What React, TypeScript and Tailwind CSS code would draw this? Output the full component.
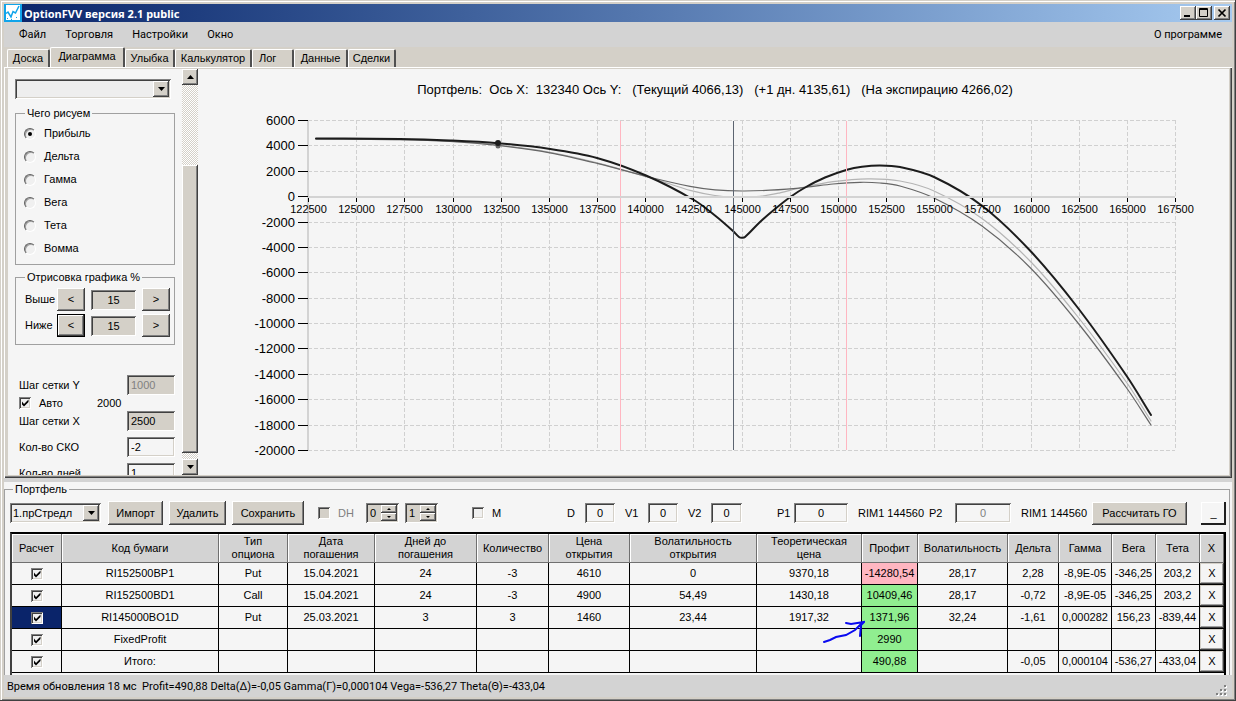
import { useState } from 'react'

const RAISED = 'bg-[#d4d0c8] shadow-[inset_-1px_-1px_#404040,inset_1px_1px_#fff,inset_-2px_-2px_#808080]'
const SUNKEN = 'shadow-[inset_1px_1px_#808080,inset_-1px_-1px_#fff,inset_2px_2px_#404040,inset_-2px_-2px_#d4d0c8]'

const TABS = [
  { label: 'Доска', width: 'w-[43px]' },
  { label: 'Диаграмма', width: 'w-[75px]' },
  { label: 'Улыбка', width: 'w-[50px]' },
  { label: 'Калькулятор', width: 'w-[77px]' },
  { label: 'Лог', width: 'w-[42px]' },
  { label: 'Данные', width: 'w-[54px]' },
  { label: 'Сделки', width: 'w-[48px]' },
]

const MODES = ['Прибыль', 'Дельта', 'Гамма', 'Вега', 'Тета', 'Вомма']

const COLUMNS = [
  { label: 'Расчет', width: 'w-[50px]' },
  { label: 'Код бумаги', width: '' },
  { label: 'Тип опциона', width: 'w-[69px]' },
  { label: 'Дата погашения', width: 'w-[87px]' },
  { label: 'Дней до погашения', width: 'w-[102px]' },
  { label: 'Количество', width: 'w-[72px]' },
  { label: 'Цена открытия', width: 'w-[81px]' },
  { label: 'Волатильность открытия', width: 'w-[127px]' },
  { label: 'Теоретическая цена', width: 'w-[105px]' },
  { label: 'Профит', width: 'w-[56px]' },
  { label: 'Волатильность', width: 'w-[90px]' },
  { label: 'Дельта', width: 'w-[51px]' },
  { label: 'Гамма', width: 'w-[53px]' },
  { label: 'Вега', width: 'w-[44px]' },
  { label: 'Тета', width: 'w-[44px]' },
  { label: 'X', width: 'w-6' },
]

const PROFIT_COL = 8

const ROWS = [
  ['RI152500BP1', 'Put', '15.04.2021', '24', '-3', '4610', '0', '9370,18', '-14280,54', '28,17', '2,28', '-8,9E-05', '-346,25', '203,2'],
  ['RI152500BD1', 'Call', '15.04.2021', '24', '-3', '4900', '54,49', '1430,18', '10409,46', '28,17', '-0,72', '-8,9E-05', '-346,25', '203,2'],
  ['RI145000BO1D', 'Put', '25.03.2021', '3', '3', '1460', '23,44', '1917,32', '1371,96', '32,24', '-1,61', '0,000282', '156,23', '-839,44'],
  ['FixedProfit', '', '', '', '', '', '', '', '2990', '', '', '', '', ''],
  ['Итого:', '', '', '', '', '', '', '', '490,88', '', '-0,05', '0,000104', '-536,27', '-433,04'],
]

type Point = [number, number]

const EXPIRATION: Point[] = [
  [316, 138.5], [400, 139], [450, 140.5], [498, 143.2], [550, 149], [597, 158], [646, 175.5], [694, 200], [715, 215.5],
  [733, 231], [739, 237], [742, 237.7], [745, 237], [760, 222], [775, 209], [791, 196.5], [806, 187], [825, 177.5],
  [847, 169.7], [862, 166.7], [880, 165.4], [900, 167], [934, 177], [982, 205.7], [1030, 250.5], [1078, 308],
  [1127, 376.5], [1151, 415],
]
const CURRENT: Point[] = [
  [316, 139], [400, 139.6], [450, 141.3], [498, 145.4], [550, 152.8], [597, 163.3], [653, 178], [690, 186.3],
  [715, 189.8], [742, 191], [770, 190.2], [806, 187.3], [833, 184], [860, 182.3], [880, 183], [900, 186], [934, 198],
  [982, 226], [1030, 267.5], [1078, 323], [1127, 388.5], [1151, 425],
]
const NEXT_DAY: Point[] = [
  [316, 139], [400, 139.6], [450, 141.2], [498, 145], [550, 152.3], [597, 162.8], [646, 176.5], [670, 184],
  [690, 190.3], [715, 195.5], [735, 197.3], [760, 196.3], [780, 192.8], [800, 188], [833, 181.7], [868, 178.8],
  [900, 181], [934, 191], [982, 218.5], [1030, 261], [1078, 317], [1127, 383], [1151, 421],
]

// Catmull-Rom through the points, written as cubic segments
function smooth(points: Point[]) {
  let d = `M${points[0][0]} ${points[0][1]}`
  for (let i = 0; i < points.length - 1; i++) {
    const a = points[i - 1] ?? points[i]
    const b = points[i]
    const c = points[i + 1]
    const e = points[i + 2] ?? c
    const k = (c[0] - b[0]) / 3
    const m1 = (c[1] - a[1]) / (c[0] - a[0])
    const m2 = (e[1] - b[1]) / (e[0] - b[0])
    d += `C${b[0] + k} ${b[1] + m1 * k} ${c[0] - k} ${c[1] - m2 * k} ${c[0]} ${c[1]}`
  }
  return d
}

export default function App() {
  return (
    <div className="flex h-screen flex-col overflow-hidden bg-[#d4d0c8] p-1 font-['Liberation_Sans',Arial,sans-serif] text-[11px] leading-[13px] text-black shadow-[inset_-1px_-1px_#404040,inset_1px_1px_#d4d0c8,inset_2px_2px_#fff,inset_-2px_-2px_#808080]">
      <TitleBar />
      <MenuBar />
      <TabStrip />
      <main className="flex min-h-0 flex-1 border-t border-l border-white pr-[3px] pb-[3px] pl-[3px] shadow-[inset_-1px_-1px_#404040,inset_-2px_-2px_#808080]">
        <div className="mt-px flex min-w-0 flex-1 bg-[#f5f5f5]">
          <Settings />
          <ScrollBar />
          <Chart />
        </div>
      </main>
      <div className="h-1 shrink-0 bg-[#d3d3d3]" />
      <Portfolio />
      <footer className="flex h-[22px] shrink-0 items-center justify-between bg-[#d3d3d3] pl-[3px] font-[Roboto,'Noto_Sans',sans-serif]">
        <span className="whitespace-pre">Время обновления 18 мс  Profit=490,88 Delta(Δ)=-0,05 Gamma(Г)=0,000104 Vega=-536,27 Theta(Θ)=-433,04</span>
        <svg width="12" height="12" viewBox="0 0 12 12" className="mr-1 self-end">
          {[[8, 0], [4, 4], [8, 4], [0, 8], [4, 8], [8, 8]].map(([x, y]) => (
            <g key={`${x}-${y}`}>
              <rect x={x + 1} y={y + 1} width="2" height="2" fill="#fff" />
              <rect x={x} y={y} width="2" height="2" fill="#808080" />
            </g>
          ))}
        </svg>
      </footer>
    </div>
  )
}

function TitleBar() {
  return (
    <header className="flex h-[18px] shrink-0 items-center bg-linear-to-r from-[#0a246a] to-[#a6caf0] pr-0.5">
      <svg width="18" height="18" viewBox="0 0 18 18">
        <rect width="18" height="18" fill="#10a4ea" />
        <rect x="2" y="1" width="14" height="15" fill="#fff" />
        <path d="M2 9.500L4 8L7 13L9 7.500L11.500 9L15 2" stroke="#10a4ea" strokeWidth="1.5" fill="none" />
        <path d="M3 14.500h1M7 15.500h1M12 13.500h1" stroke="#10a4ea" />
      </svg>
      <h1 className="flex-1 pl-0.5 font-['Noto_Sans',sans-serif] text-[11px] font-bold text-white">OptionFVV версия 2.1 public</h1>
      <button aria-label="Свернуть" className={`h-3.5 w-4 ${RAISED}`}>
        <svg width="16" height="14" viewBox="0 0 16 14"><path d="M4 10h6" stroke="#000" strokeWidth="2" /></svg>
      </button>
      <button aria-label="Развернуть" className={`h-3.5 w-4 ${RAISED}`}>
        <svg width="16" height="14" viewBox="0 0 16 14" fill="none" stroke="#000"><path d="M3.500 2.500h8v8h-8zM3 3.500h9" /></svg>
      </button>
      <button aria-label="Закрыть" className={`ml-0.5 h-3.5 w-4 ${RAISED}`}>
        <svg width="16" height="14" viewBox="0 0 16 14"><path d="M4.500 3.500l7 7M11.500 3.500l-7 7" stroke="#000" strokeWidth="1.7" /></svg>
      </button>
    </header>
  )
}

function MenuBar() {
  return (
    <nav className="flex h-[25px] shrink-0 items-center gap-[19px] bg-[#d3d3d3] pr-2.5 pl-[15px] font-[Roboto,'Noto_Sans',sans-serif]">
      <button>Файл</button>
      <button>Торговля</button>
      <button>Настройки</button>
      <button>Окно</button>
      <button className="ml-auto">О программе</button>
    </nav>
  )
}

function TabStrip() {
  const [active, setActive] = useState('Диаграмма')
  return (
    <div role="tablist" className="flex h-5 shrink-0 items-end pl-[3px]">
      {TABS.map(({ label, width }) => (
        <button
          key={label}
          role="tab"
          aria-selected={active === label}
          onClick={() => setActive(label)}
          className={`${width} ${active === label ? 'h-5 pb-0.5' : 'h-[18px]'} ${label === 'Лог' ? 'pl-1.5 text-left' : ''} shrink-0 rounded-t-[2px] border-t border-r-2 border-l border-t-white border-r-[#505050] border-l-white whitespace-nowrap`}
        >
          {label}
        </button>
      ))}
    </div>
  )
}

function Check({ label, checked = false, disabled = false }: { label: string; checked?: boolean; disabled?: boolean }) {
  const [on, setOn] = useState(checked)
  return (
    <span className="relative inline-block size-3 shrink-0 align-middle">
      <input
        type="checkbox"
        aria-label={label}
        checked={on}
        disabled={disabled}
        onChange={() => setOn(!on)}
        className={`block size-3 appearance-none ${disabled ? 'bg-[#d4d0c8]' : 'bg-[#f0f0f0]'} ${SUNKEN}`}
      />
      {on && (
        <svg width="12" height="12" viewBox="0 0 12 12" className="pointer-events-none absolute inset-0">
          <path d="M3 4.500v3L5 9.500L9.500 5V2.500L5 7z" fill="#000" />
        </svg>
      )}
    </span>
  )
}

function DropDown({ label, options, className }: { label: string; options: string[]; className: string }) {
  return (
    <div className={`relative shrink-0 ${className}`}>
      <select aria-label={label} className={`block size-full appearance-none bg-[#eee] pr-5 pl-[3px] ${SUNKEN}`}>
        {options.map((o) => <option key={o}>{o}</option>)}
      </select>
      <span className={`pointer-events-none absolute top-0.5 right-0.5 bottom-0.5 flex w-4 items-center justify-center ${RAISED}`}>
        <svg width="7" height="4" viewBox="0 0 7 4"><path d="M0 0h7L3.500 4z" /></svg>
      </span>
    </div>
  )
}

function Field({ label, value, className, disabled }: { label: string; value: string; className: string; disabled?: boolean }) {
  return (
    <input
      aria-label={label}
      defaultValue={value}
      disabled={disabled}
      className={`h-5 shrink-0 px-1 ${disabled ? 'text-[#808080]' : ''} ${SUNKEN} ${className}`}
    />
  )
}

function Settings() {
  const [mode, setMode] = useState('Прибыль')
  return (
    <aside className="flex w-[174px] shrink-0 flex-col overflow-hidden pr-[7px] pl-[7px]">
      <DropDown label="График" options={['']} className="mt-2.5 h-5 w-[156px]" />

      <fieldset className="mt-2 h-[158px] w-[160px] shrink-0 border border-[#a0a0a0] pl-2">
        <legend className="ml-px px-0.5">Чего рисуем</legend>
        <div className="mt-[7px] flex flex-col gap-2.5">
          {MODES.map((name) => (
            <label key={name} className="flex h-[13px] items-center gap-2">
              <span className="relative size-3">
                <input
                  type="radio"
                  name="mode"
                  checked={mode === name}
                  onChange={() => setMode(name)}
                  className="block size-3 appearance-none rounded-full border border-t-[#606060] border-r-white border-b-white border-l-[#606060] bg-[#f0f0f0] shadow-[inset_1px_1px_#a0a0a0]"
                />
                {mode === name && <span className="pointer-events-none absolute top-1 left-1 size-1 rounded-full bg-black" />}
              </span>
              {name}
            </label>
          ))}
        </div>
      </fieldset>

      <fieldset className="mt-1.5 h-[74px] w-[160px] shrink-0 border border-[#a0a0a0] pl-[9px]">
        <legend className="px-0.5">Отрисовка графика %</legend>
        <div className="mt-1 flex flex-col gap-[3px]">
          <Stepper label="Выше" />
          <Stepper label="Ниже" focused />
        </div>
      </fieldset>

      <div className="mt-[30px] flex shrink-0 items-center pl-1">
        <span className="flex-1">Шаг сетки Y</span>
        <Field label="Шаг сетки Y" value="1000" disabled className="w-12 bg-[#d4d0c8]" />
      </div>
      <label className="flex h-4 shrink-0 items-center pl-1">
        <Check label="Авто" checked />
        <span className="w-[66px] pl-2">Авто</span>
        <span>2000</span>
      </label>
      <div className="flex shrink-0 items-center pl-1">
        <span className="flex-1">Шаг сетки X</span>
        <Field label="Шаг сетки X" value="2500" className="w-12 bg-[#d4d0c8]" />
      </div>
      <div className="mt-1.5 flex shrink-0 items-center pl-1">
        <span className="flex-1">Кол-во СКО</span>
        <Field label="Кол-во СКО" value="-2" className="w-12" />
      </div>
      <div className="mt-1.5 flex shrink-0 items-center pl-1">
        <span className="flex-1">Кол-во дней</span>
        <Field label="Кол-во дней" value="1" className="w-12" />
      </div>
    </aside>
  )
}

function Stepper({ label, focused }: { label: string; focused?: boolean }) {
  return (
    <div className="flex h-[23px] items-center">
      <span className="w-8">{label}</span>
      <button className={`h-[23px] w-7 ${RAISED} ${focused ? 'border border-black' : ''}`}>&lt;</button>
      <Field label={label} value="15" className="mx-1.5 w-[45px] bg-[#d4d0c8] text-center" />
      <button className={`h-[23px] w-7 ${RAISED}`}>&gt;</button>
    </div>
  )
}

function ScrollBar() {
  return (
    <div className="flex w-4 shrink-0 flex-col bg-[repeating-conic-gradient(#fff_0_25%,#d4d0c8_0_50%)] bg-[length:2px_2px]">
      <button aria-label="Вверх" className={`flex h-4 shrink-0 items-center justify-center ${RAISED}`}>
        <svg width="7" height="4" viewBox="0 0 7 4"><path d="M0 4h7L3.500 0z" /></svg>
      </button>
      <div className={`mt-20 mb-1.5 flex-1 ${RAISED}`} />
      <button aria-label="Вниз" className={`flex h-4 shrink-0 items-center justify-center ${RAISED}`}>
        <svg width="7" height="4" viewBox="0 0 7 4"><path d="M0 0h7L3.500 4z" /></svg>
      </button>
    </div>
  )
}

function Chart() {
  const xs = Array.from({ length: 19 }, (_, i) => ({ value: 122500 + i * 2500, x: Math.round(308 + (i * 867) / 18) + 0.5 }))
  const ys = Array.from({ length: 14 }, (_, i) => ({ value: 6000 - i * 2000, y: Math.round(120 + (i * 330) / 13) + 0.5 }))
  return (
    <div className="min-w-0 flex-1 overflow-hidden">
      <svg viewBox="198 69 1031 400" preserveAspectRatio="xMinYMin meet" className="size-full">
        <text x="715" y="94" fontSize="13" textAnchor="middle" className="whitespace-pre">
          {'Портфель:  Ось X:  132340 Ось Y:   (Текущий 4066,13)   (+1 дн. 4135,61)   (На экспирацию 4266,02)'}
        </text>
        <g stroke="#d0d0d0" strokeDasharray="4 2">
          {xs.map(({ x }) => <path key={x} d={`M${x} 120V450`} />)}
          {ys.map(({ y }) => <path key={y} d={`M308 ${y}H1175`} />)}
        </g>
        <g fill="none" strokeLinecap="round">
          <path d={smooth(NEXT_DAY)} stroke="#b4b4b4" strokeWidth="1.2" />
          <path d={smooth(CURRENT)} stroke="#666" strokeWidth="1.2" />
          <path d={smooth(EXPIRATION)} stroke="#1c1c1c" strokeWidth="2" />
        </g>
        <circle cx="498" cy="146" r="2.500" fill="#666" />
        <circle cx="498" cy="143" r="3" fill="#1c1c1c" />
        <path d="M620.500 121V450M846.500 121V450" stroke="#ffb6c1" />
        <path d="M733.500 121V450" stroke="#5c6470" />
        <path d="M308 197H1175M308 120V450" stroke="#d3d3d3" strokeWidth="2" />
        {ys.map(({ value, y }) => (
          <g key={value}>
            <path d={`M298 ${y}H308`} stroke="#000" />
            <text x="295" y={y + 4.500} fontSize="13" textAnchor="end">{value}</text>
          </g>
        ))}
        {xs.map(({ value, x }) => (
          <g key={value}>
            <path d={`M${x} 198V202`} stroke="#000" />
            <text x={x} y="213" fontSize="11" textAnchor="middle">{value}</text>
          </g>
        ))}
      </svg>
    </div>
  )
}

function Spinner({ label, value }: { label: string; value: string }) {
  return (
    <div className={`flex h-5 w-[33px] shrink-0 bg-[#d4d0c8] p-0.5 ${SUNKEN}`}>
      <input aria-label={label} defaultValue={value} className="w-3 min-w-0 flex-1 pl-0.5" />
      <div className="flex w-4 flex-col">
        <button aria-label="Больше" className={`flex h-2 items-center justify-center ${RAISED}`}>
          <svg width="4" height="2" viewBox="0 0 4 2"><path d="M0 2h4L2 0z" /></svg>
        </button>
        <button aria-label="Меньше" className={`flex h-2 items-center justify-center ${RAISED}`}>
          <svg width="4" height="2" viewBox="0 0 4 2"><path d="M0 0h4L2 2z" /></svg>
        </button>
      </div>
    </div>
  )
}

function Toolbar() {
  return (
    <div className="flex h-6 items-center whitespace-nowrap">
      <DropDown label="Портфель" options={['1.прСтредл']} className="h-5 w-[91px]" />
      <button className={`ml-[7px] h-6 w-[55px] shrink-0 ${RAISED}`}>Импорт</button>
      <button className={`ml-1.5 h-6 w-[57px] shrink-0 ${RAISED}`}>Удалить</button>
      <button className={`ml-1.5 h-6 w-[72px] shrink-0 ${RAISED}`}>Сохранить</button>
      <label className="ml-3.5 flex w-12 shrink-0 items-center gap-2 text-[#808080]">
        <Check label="DH" disabled />
        DH
      </label>
      <Spinner label="DH от" value="0" />
      <div className="w-1.5 shrink-0" />
      <Spinner label="DH до" value="1" />
      <label className="ml-[34px] flex w-[95px] shrink-0 items-center gap-2">
        <Check label="M" />
        M
      </label>
      <span className="w-[18px] shrink-0">D</span>
      <Field label="D" value="0" className="w-[30px] text-center" />
      <span className="ml-2.5 w-[23px] shrink-0">V1</span>
      <Field label="V1" value="0" className="w-[30px] text-center" />
      <span className="ml-2.5 w-[23px] shrink-0">V2</span>
      <Field label="V2" value="0" className="w-[31px] text-center" />
      <div className="min-w-2 flex-1" />
      <span className="w-[17px] shrink-0">P1</span>
      <Field label="P1" value="0" className="w-[54px] text-center" />
      <span className="ml-2.5 w-[71px] shrink-0">RIM1 144560</span>
      <span className="w-[26px] shrink-0">P2</span>
      <Field label="P2" value="0" disabled className="w-14 text-center" />
      <span className="ml-2.5 w-[71px] shrink-0">RIM1 144560</span>
      <button className={`h-[23px] w-[95px] shrink-0 ${RAISED}`}>Рассчитать ГО</button>
      <button className="ml-3.5 h-[23px] w-[25px] shrink-0 shadow-[inset_-2px_-2px_#202020,inset_1px_1px_#fff]">_</button>
    </div>
  )
}

function profitColor(value: string) {
  return value.startsWith('-') ? 'bg-[#ffb6c1]' : 'bg-[#90ee90]'
}

function Portfolio() {
  return (
    <section className="shrink-0 bg-[#f5f5f5] pt-px">
      <fieldset className="mr-0.5 border border-b-0 border-[#a0a0a0] pr-[3px] pl-[5px]">
        <legend className="ml-[3px] px-0.5">Портфель</legend>
        <div className="pt-[5px]">
          <Toolbar />
        </div>
        <div className="relative mt-[7px] border-2 border-b-0 border-t-black border-r-black border-l-[#404040] pb-0.5">
          <table className="w-full table-fixed border-separate border-spacing-0 text-center">
            <thead>
              <tr className="h-[29px] bg-[#d3d3d3]">
                {COLUMNS.map(({ label, width }) => (
                  <th key={label} className={`${width} border-r border-b border-[#707070] px-1 font-normal shadow-[inset_1px_1px_#fff]`}>
                    {label}
                  </th>
                ))}
              </tr>
            </thead>
            <tbody>
              {ROWS.map((row, r) => (
                <tr key={row[0]} className="h-[22px]">
                  <td className={`border-r border-b border-black ${r === 2 ? 'bg-[#0a246a]' : ''}`}>
                    <Check label={row[0]} checked />
                  </td>
                  {row.map((cell, c) => (
                    <td key={c} className={`border-r border-b border-black whitespace-nowrap ${c === PROFIT_COL ? profitColor(cell) : ''}`}>
                      {cell}
                    </td>
                  ))}
                  <td className="border-b border-black">
                    <button aria-label={`Удалить ${row[0]}`} className="block h-[21px] w-full shadow-[inset_-1px_-1px_#404040,inset_1px_1px_#d4d0c8,inset_-2px_-2px_#a0a0a0]">X</button>
                  </td>
                </tr>
              ))}
            </tbody>
          </table>
          {/* отметка у профита */}
          <svg width="42" height="24" viewBox="0 0 42 24" fill="none" stroke="#0a0af0" strokeWidth="2" strokeLinecap="round" className="pointer-events-none absolute right-[359px] bottom-[31px]">
            <path d="M1 22l6-2 6-3 10-2 9-5 7-7M23 3l5 1 13-2-3 3-1 11" />
          </svg>
        </div>
      </fieldset>
    </section>
  )
}
